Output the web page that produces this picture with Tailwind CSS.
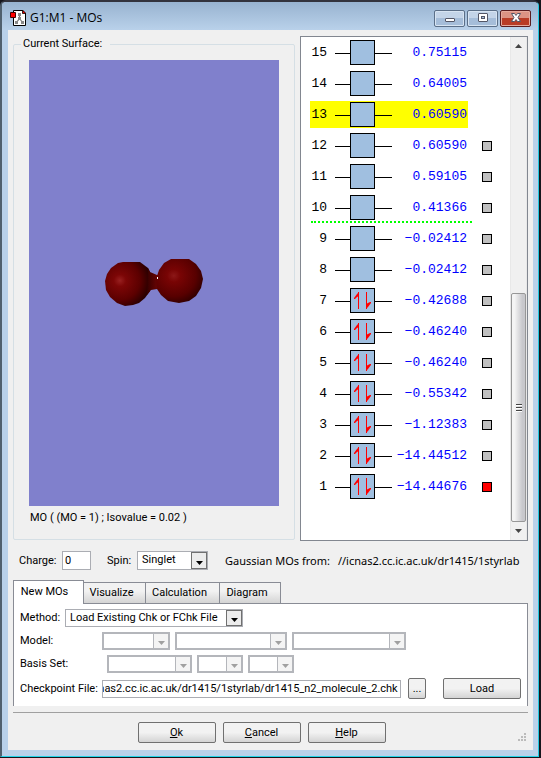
<!DOCTYPE html>
<html lang="en">
<head>
    <meta charset="UTF-8">
    <meta name="viewport" content="width=device-width, initial-scale=1.0">
    <title>G1:M1 - MOs</title>
    <script src="https://cdn.jsdelivr.net/npm/@tailwindcss/browser@4"></script>
</head>
<body class="flex min-h-screen bg-[#15151c] pr-[2px] pb-px font-['Roboto','Liberation_Sans',sans-serif] text-[11px] leading-4 text-black">
    <div class="flex min-w-0 flex-1 flex-col rounded-t-md border-t-2 border-r border-b border-l-2 border-t-[#33333d] border-r-[#22c8e0] border-b-[#22d3e8] border-l-[#50606e] bg-[#b9d1ea] pr-[5px] pb-[6px] pl-[6px]">
        <!-- Title bar -->
        <header class="-mr-[5px] -ml-[6px] flex h-7 items-center rounded-t bg-linear-to-b from-[#98b3d0] to-[#b9d1ea] pr-[7px] pl-2">
            <svg class="mt-1 h-[18px] w-4" viewBox="0 0 16 18" aria-hidden="true">
                <path d="M3.500 1.500h9l3 3v12h-12z" fill="#fff" stroke="#000"/>
                <path d="M12.500 1v3.500h3.500z" fill="#f00" stroke="#000" stroke-width=".8"/>
                <path d="M9.500 5.500v4L6 14M9.500 9.500L13 14" fill="none" stroke="#777" stroke-width="1.200"/>
                <path d="M8 4h3v3h-3zM8 8h3v3h-3zM5 12h3v3h-3zM11 12h3v3h-3z" fill="#888"/>
                <path d="M.5 3.500h5v5h-5z" fill="#f00" stroke="#400"/>
            </svg>
            <h1 class="ml-1 flex-1 pt-1 font-['Open_Sans','Noto_Sans',sans-serif] text-[12px]">G1:M1 - MOs</h1>
            <div class="mt-1 flex gap-[2px]">
                <button aria-label="Minimize" class="flex h-[17px] w-[31px] items-center justify-center rounded-xs border border-[#5b6f88] bg-linear-to-b from-[#c3d4e8] from-50% to-[#a5bdd9] to-50% shadow-[inset_0_0_0_1px_#d7e4f2]">
                    <svg width="12" height="12" viewBox="0 0 12 12"><rect x="1.500" y="6.500" width="9" height="3" rx=".5" fill="#fff" stroke="#535666"/></svg>
                </button>
                <button aria-label="Maximize" class="flex h-[17px] w-[31px] items-center justify-center rounded-xs border border-[#5b6f88] bg-linear-to-b from-[#c3d4e8] from-50% to-[#a5bdd9] to-50% shadow-[inset_0_0_0_1px_#d7e4f2]">
                    <svg width="12" height="12" viewBox="0 0 12 12"><rect x="1.500" y="1.500" width="9" height="8" rx=".5" fill="#fff" stroke="#535666"/><rect x="4.500" y="4.500" width="3" height="2" fill="#a9c0dc" stroke="#535666"/></svg>
                </button>
                <button aria-label="Close" class="flex h-[17px] w-[31px] items-center justify-center rounded-xs border border-[#5a1d20] bg-linear-to-b from-[#dc9384] from-50% to-[#b93c26] to-50% shadow-[inset_0_0_0_1px_#e5a99c]">
                    <svg width="12" height="12" viewBox="0 0 12 12"><path d="M1.500 1.500h3L6 3.500l1.500-2h3L8 5.500l2.500 4h-3L6 7.500l-1.500 2h-3L4 5.500z" fill="#fff" stroke="#535666"/></svg>
                </button>
            </div>
        </header>

        <main class="flex flex-1 flex-col bg-[#f0f0f0] px-[5px] pt-[6px]">
            <div class="flex gap-[5px]">
                <!-- Current surface -->
                <fieldset class="mb-[1px] flex min-w-0 flex-1 flex-col rounded-xs border border-[#d5dfe5] px-[15px] pb-[13px]">
                    <legend class="-ml-2 px-[2px] pr-2">Current Surface:</legend>
                    <div class="mt-2 flex h-[446px] items-center justify-center bg-[#8080cc]">
                        <svg width="98" height="48" viewBox="0 0 98 48" role="img" aria-label="Orbital surface">
                            <defs>
                                <radialGradient id="lobeLeft" cx=".33" cy=".42" r=".68">
                                    <stop offset="0" stop-color="#982020"/>
                                    <stop offset=".2" stop-color="#7c0606"/>
                                    <stop offset=".65" stop-color="#5c0000"/>
                                    <stop offset="1" stop-color="#260000"/>
                                </radialGradient>
                                <radialGradient id="lobeRight" cx=".38" cy=".38" r=".72">
                                    <stop offset="0" stop-color="#8c1818"/>
                                    <stop offset=".2" stop-color="#780404"/>
                                    <stop offset=".65" stop-color="#580000"/>
                                    <stop offset="1" stop-color="#240000"/>
                                </radialGradient>
                                <linearGradient id="neck">
                                    <stop offset="0" stop-color="#350000"/>
                                    <stop offset="1" stop-color="#700404"/>
                                </linearGradient>
                            </defs>
                            <path d="M13 4L18 3H35L39 6L43 9L45 13V32L40 39L34 44L28 46L20 47L12 44L5 38L1 31L0 22L2 15L6 9z" fill="url(#lobeLeft)"/>
                            <path d="M43 9L45 13L52 16H54V30H52L46 31L42 36z" fill="url(#neck)"/>
                            <path d="M66 0H84L91 5L96 12L98 20L96 29L91 37L84 42L74 44L63 42L56 36L52 30L51 20L54 11L59 4z" fill="url(#lobeRight)"/>
                            <path d="M52 18h1v2h-1z" fill="#fff"/>
                        </svg>
                    </div>
                    <p class="mt-1 ml-[1px]">MO ( (MO = 1) ; Isovalue = 0.02 )</p>
                </fieldset>

                <!-- Orbital energy list -->
                <section class="flex w-[228px] border border-[#828790] bg-white" aria-label="Orbital energies">
                    <div class="min-w-0 flex-1 pb-[38px] pl-[9px]">
                        <table class="w-full table-fixed border-collapse font-['Liberation_Mono',monospace] text-[13px]">
                            <colgroup>
                                <col class="w-[25px]"><col class="w-[57px]"><col class="w-[76px]"><col>
                            </colgroup>
                            <tbody id="orbitals"></tbody>
                        </table>
                    </div>
                    <div class="flex w-[17px] flex-col items-center border-x border-[#e8e8e8] bg-[#f0f0f0]" aria-hidden="true">
                        <div class="flex h-[17px] items-center"><svg width="7" height="4"><path d="M0 4L3.500 0L7 4z" fill="#444"/></svg></div>
                        <div class="flex-1"></div>
                        <div class="flex h-[229px] w-[15px] flex-col items-center justify-center gap-[1px] rounded-xs border border-[#979797] bg-linear-to-r from-[#f4f4f4] from-20% to-[#c8c8cc] to-80%">
                            <div class="h-[2px] w-[6px] border-t border-[#444] bg-white"></div>
                            <div class="h-[2px] w-[6px] border-t border-[#444] bg-white"></div>
                            <div class="h-[2px] w-[6px] border-t border-[#444] bg-white"></div>
                        </div>
                        <div class="flex h-[18px] items-center"><svg width="7" height="4"><path d="M0 0L3.500 4L7 0z" fill="#444"/></svg></div>
                    </div>
                </section>
            </div>

            <!-- Charge and spin -->
            <div class="mt-[10px] flex items-center px-[6px]">
                <label for="charge" class="w-[43px]">Charge:</label>
                <input id="charge" type="text" value="0" class="h-[19px] w-[29px] border border-[#abadb3] bg-white px-[2px]">
                <label for="spin" class="ml-4 w-[30px]">Spin:</label>
                <div class="relative">
                    <select id="spin" class="block h-[19px] w-[71px] appearance-none border border-[#abadb3] bg-white pr-4 pb-[2px] pl-1">
                        <option>Singlet</option>
                        <option>Triplet</option>
                    </select>
                    <span class="pointer-events-none absolute inset-y-[1px] right-[1px] flex w-4 items-center justify-center border border-[#707070] bg-[#ececec]"><svg class="mt-1" width="7" height="4"><path d="M0 0h7L3.500 4z"/></svg></span>
                </div>
                <p class="ml-[17px] flex min-w-0 flex-1 gap-2 overflow-hidden font-['Noto_Sans',sans-serif] whitespace-nowrap"><span>Gaussian MOs from:</span><span>//icnas2.cc.ic.ac.uk/dr1415/1styrlab</span></p>
            </div>

            <!-- Tabs -->
            <div class="mt-[10px] flex items-end" role="tablist">
                <button role="tab" aria-selected="true" class="z-10 -mb-[1px] h-6 w-[71px] border border-b-0 border-[#898c95] bg-white pr-2 pb-[2px]">New MOs</button>
                <button role="tab" aria-selected="false" class="h-[21px] w-[62px] border border-b-0 border-l-0 border-[#898c95] bg-linear-to-b from-[#f2f2f2] from-40% to-[#d4d4d4] pr-[6px]">Visualize</button>
                <button role="tab" aria-selected="false" class="h-[21px] w-[74px] border border-b-0 border-l-0 border-[#898c95] bg-linear-to-b from-[#f2f2f2] from-40% to-[#d4d4d4] pr-[6px]">Calculation</button>
                <button role="tab" aria-selected="false" class="h-[21px] w-[61px] border border-b-0 border-l-0 border-[#898c95] bg-linear-to-b from-[#f2f2f2] from-40% to-[#d4d4d4] pr-[6px]">Diagram</button>
            </div>
            <div role="tabpanel" class="border border-b-0 border-[#898c95] bg-white px-[6px] pt-[5px] pb-[7px]">
                <div class="flex items-center">
                    <label for="method" class="w-[45px]">Method:</label>
                    <div class="relative">
                        <select id="method" class="block h-[18px] w-[178px] appearance-none border border-[#abadb3] bg-white pr-4 pb-[2px] pl-1">
                            <option>Load Existing Chk or FChk File</option>
                        </select>
                        <span class="pointer-events-none absolute inset-y-[1px] right-[1px] flex w-4 items-center justify-center border border-[#707070] bg-[#ececec]"><svg class="mt-1" width="7" height="4"><path d="M0 0h7L3.500 4z"/></svg></span>
                    </div>
                </div>
                <div class="mt-[5px] flex items-center gap-[5px]">
                    <label for="model1" class="w-[77px]">Model:</label>
                    <div class="relative">
                        <select id="model1" disabled class="block h-[18px] w-[68px] appearance-none border-2 border-[#b4b6bb] bg-white"></select>
                        <span class="pointer-events-none absolute inset-y-[1px] right-[1px] flex w-4 items-center justify-center border border-[#b4b6bb] bg-[#f4f4f4]"><svg class="mt-1" width="7" height="4"><path d="M0 0h7L3.500 4z" fill="#a0a0a0"/></svg></span>
                    </div>
                    <div class="relative">
                        <select aria-label="Model method" disabled class="block h-[18px] w-[112px] appearance-none border-2 border-[#b4b6bb] bg-white"></select>
                        <span class="pointer-events-none absolute inset-y-[1px] right-[1px] flex w-4 items-center justify-center border border-[#b4b6bb] bg-[#f4f4f4]"><svg class="mt-1" width="7" height="4"><path d="M0 0h7L3.500 4z" fill="#a0a0a0"/></svg></span>
                    </div>
                    <div class="relative">
                        <select aria-label="Model functional" disabled class="block h-[18px] w-[114px] appearance-none border-2 border-[#b4b6bb] bg-white"></select>
                        <span class="pointer-events-none absolute inset-y-[1px] right-[1px] flex w-4 items-center justify-center border border-[#b4b6bb] bg-[#f4f4f4]"><svg class="mt-1" width="7" height="4"><path d="M0 0h7L3.500 4z" fill="#a0a0a0"/></svg></span>
                    </div>
                </div>
                <div class="mt-[5px] flex items-center gap-[5px]">
                    <label for="basis1" class="w-[82px]">Basis Set:</label>
                    <div class="relative">
                        <select id="basis1" disabled class="block h-[18px] w-[85px] appearance-none border-2 border-[#b4b6bb] bg-white"></select>
                        <span class="pointer-events-none absolute inset-y-[1px] right-[1px] flex w-4 items-center justify-center border border-[#b4b6bb] bg-[#f4f4f4]"><svg class="mt-1" width="7" height="4"><path d="M0 0h7L3.500 4z" fill="#a0a0a0"/></svg></span>
                    </div>
                    <div class="relative">
                        <select aria-label="Diffuse functions" disabled class="block h-[18px] w-[46px] appearance-none border-2 border-[#b4b6bb] bg-white"></select>
                        <span class="pointer-events-none absolute inset-y-[1px] right-[1px] flex w-4 items-center justify-center border border-[#b4b6bb] bg-[#f4f4f4]"><svg class="mt-1" width="7" height="4"><path d="M0 0h7L3.500 4z" fill="#a0a0a0"/></svg></span>
                    </div>
                    <div class="relative">
                        <select aria-label="Polarization functions" disabled class="block h-[18px] w-[46px] appearance-none border-2 border-[#b4b6bb] bg-white"></select>
                        <span class="pointer-events-none absolute inset-y-[1px] right-[1px] flex w-4 items-center justify-center border border-[#b4b6bb] bg-[#f4f4f4]"><svg class="mt-1" width="7" height="4"><path d="M0 0h7L3.500 4z" fill="#a0a0a0"/></svg></span>
                    </div>
                </div>
                <div class="mt-[5px] flex items-center">
                    <label for="chk" class="w-[82px]">Checkpoint File:</label>
                    <input id="chk" type="text" value="//icnas2.cc.ic.ac.uk/dr1415/1styrlab/dr1415_n2_molecule_2.chk" class="h-[18px] min-w-0 flex-1 border border-[#abadb3] bg-white pr-[2px]">
                    <button aria-label="Browse" class="ml-[7px] h-[21px] w-[18px] rounded-xs border border-[#707070] bg-linear-to-b from-[#f2f2f2] from-50% to-[#d4d4d4]">...</button>
                    <button class="ml-[17px] h-[21px] w-[78px] rounded-xs border border-[#707070] bg-linear-to-b from-[#f2f2f2] from-50% to-[#d4d4d4]">Load</button>
                </div>
            </div>

            <!-- Dialog buttons -->
            <footer class="relative mt-[6px] flex justify-center gap-[7px] border-t border-[#a0a0a0] pt-[9px] pr-[18px] pb-[6px]">
                <button class="h-[21px] w-[78px] rounded-xs border border-[#707070] bg-linear-to-b from-[#f2f2f2] from-50% to-[#d4d4d4]"><u>O</u>k</button>
                <button class="h-[21px] w-[78px] rounded-xs border border-[#707070] bg-linear-to-b from-[#f2f2f2] from-50% to-[#d4d4d4]"><u>C</u>ancel</button>
                <button class="h-[21px] w-[78px] rounded-xs border border-[#707070] bg-linear-to-b from-[#f2f2f2] from-50% to-[#d4d4d4]"><u>H</u>elp</button>
                <svg class="absolute right-[2px] bottom-2" width="8" height="8" aria-hidden="true"><path d="M6 0h2v2h-2zM3 3h2v2h-2zM6 3h2v2h-2zM0 6h2v2h-2zM3 6h2v2h-2zM6 6h2v2h-2z" fill="#bbb"/></svg>
            </footer>
        </main>
    </div>

    <script>
        // check: null = no box, false = listed, true = currently shown
        const orbitals = [
            { n: 15, energy: '0.75115', check: null },
            { n: 14, energy: '0.64005', check: null },
            { n: 13, energy: '0.60590', check: null, selected: true },
            { n: 12, energy: '0.60590', check: false },
            { n: 11, energy: '0.59105', check: false },
            { n: 10, energy: '0.41366', check: false, gap: true },
            { n: 9, energy: '−0.02412', check: false },
            { n: 8, energy: '−0.02412', check: false },
            { n: 7, energy: '−0.42688', check: false, filled: true },
            { n: 6, energy: '−0.46240', check: false, filled: true },
            { n: 5, energy: '−0.46240', check: false, filled: true },
            { n: 4, energy: '−0.55342', check: false, filled: true },
            { n: 3, energy: '−1.12383', check: false, filled: true },
            { n: 2, energy: '−14.44512', check: false, filled: true },
            { n: 1, energy: '−14.44676', check: true, filled: true }
        ];

        const electrons = '<path d="M23.500 21V4M31.500 4V21" fill="none" stroke="#f00"/><path d="M24 4v4l-2 1l-2 2h-1v-1l3-4zM31 21v-5l2-1l2-1h1v1l-3 4z" fill="#f00"/>';

        document.getElementById('orbitals').innerHTML = orbitals.map(o => {
            const bg = o.selected ? 'bg-[#ffff00]' : '';
            const line = o.gap ? '<div class="absolute top-[29px] left-[1px] w-[161px] border-t-2 border-dotted border-[#00ff00]"></div>' : '';
            const box = o.check === null ? '' :
                `<input type="checkbox" aria-label="Surface ${o.n}" ${o.check ? 'checked' : ''} class="ml-[14px] size-[10px] appearance-none border border-black bg-[#c0c0c0] checked:bg-[#ff0000]">`;
            return `<tr class="relative h-[31px]">
                <td class="p-0">${line}<div class="flex h-[27px] items-center justify-end pr-2 ${bg}">${o.n}</div></td>
                <td class="p-0"><div class="flex h-[27px] items-center ${bg}"><svg width="57" height="25"><path d="M0 13.500H57" stroke="#000"/><rect x="15.500" y=".5" width="24" height="24" fill="#a0bfe0" stroke="#000"/>${o.filled ? electrons : ''}</svg></div></td>
                <td class="p-0"><div class="flex h-[27px] items-center justify-end pr-[1px] text-[#0000ff] ${bg}">${o.energy}</div></td>
                <td class="p-0"><div class="flex h-[27px] items-center">${box}</div></td>
            </tr>`;
        }).join('');

        // keep the file name end visible in the path box
        const chk = document.getElementById('chk');
        chk.scrollLeft = chk.scrollWidth;
    </script>
</body>
</html>
